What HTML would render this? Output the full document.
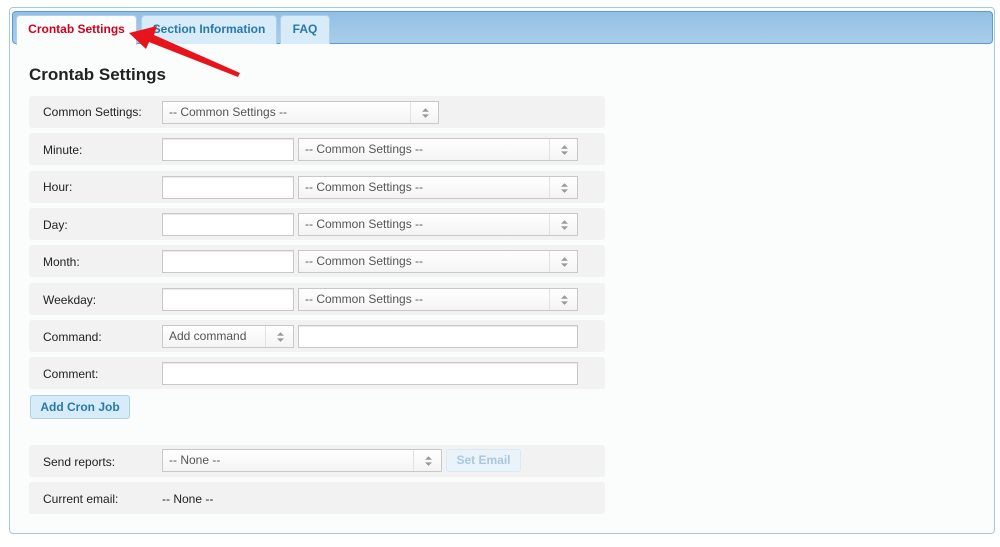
<!DOCTYPE html>
<html><head><style>
*{box-sizing:border-box;margin:0;padding:0}
body{width:1000px;height:547px;background:#fff;font-family:"Liberation Sans",Arial,sans-serif;font-size:12px;color:#222;position:relative;overflow:hidden}
.abs{position:absolute}
.panel{left:9px;top:7px;width:986px;height:527px;border:1px solid #a6c9e2;border-radius:4px;background:#fbfcfc}
.band{left:12px;top:11px;width:981px;height:33px;border:1px solid #5b9bd5;border-radius:4px;background:linear-gradient(#93bfe6,#a9cde9)}
.tab{top:15px;height:29px;border:1px solid #aed0ea;border-bottom:none;border-radius:4px 4px 0 0;background:#d7ebf9;color:#2779aa;font-weight:bold;font-size:12px;text-align:center;line-height:27px}
.tab.act{background:#fbfcfc;color:#d0021b;height:30px}
h1{position:absolute;left:29px;top:65px;font-size:17px;font-weight:bold;color:#222}
.row{left:29px;width:576px;height:32px;background:#f2f2f2;border-radius:3px}
.lbl{left:43px;font-size:12px;color:#222;top:0}
.inp{height:23px;border:1px solid #c8c8c8;background:#fff;box-shadow:inset 0 1px 1px #e8e8e8}
.sel{height:23px;border:1px solid #c8c8c8;background:linear-gradient(#fff,#f4f4f4);color:#555;font-size:12px;line-height:21px;padding-left:6px}
.sel .dv{position:absolute;right:27px;top:0;bottom:0;border-left:1px solid #e2e2e2}
.sel .ar{position:absolute;right:9px;top:6px;width:7px;height:10px}
.btn{border:1px solid #aed0ea;border-radius:3px;background:#d7ebf9;color:#2779aa;font-weight:bold;font-size:12px;text-align:center}
</style></head><body>
<div class="abs panel"></div>
<div class="abs band"></div>
<div class="abs tab act" style="left:16px;width:121px">Crontab Settings</div>
<div class="abs tab" style="left:141px;width:136px">Section Information</div>
<div class="abs tab" style="left:280px;width:50px">FAQ</div>
<h1>Crontab Settings</h1>

<div class="abs row" style="top:96px"></div>
<div class="abs lbl" style="top:105px">Common Settings:</div>
<div class="abs sel" style="left:162px;top:101px;width:277px">-- Common Settings --<span class="dv"></span><svg class="ar" viewBox="0 0 8 11"><path d="M0 4L4 0L8 4ZM0 7L4 11L8 7Z" fill="#999"/></svg></div>

<div class="abs row" style="top:133px"></div><div class="abs lbl" style="top:143px">Minute:</div>
<div class="abs inp" style="left:162px;top:138px;width:132px"></div>
<div class="abs sel" style="left:298px;top:138px;width:280px">-- Common Settings --<span class="dv"></span><svg class="ar" viewBox="0 0 8 11"><path d="M0 4L4 0L8 4ZM0 7L4 11L8 7Z" fill="#999"/></svg></div>

<div class="abs row" style="top:171px"></div><div class="abs lbl" style="top:180px">Hour:</div>
<div class="abs inp" style="left:162px;top:176px;width:132px"></div>
<div class="abs sel" style="left:298px;top:176px;width:280px">-- Common Settings --<span class="dv"></span><svg class="ar" viewBox="0 0 8 11"><path d="M0 4L4 0L8 4ZM0 7L4 11L8 7Z" fill="#999"/></svg></div>

<div class="abs row" style="top:208px"></div><div class="abs lbl" style="top:218px">Day:</div>
<div class="abs inp" style="left:162px;top:213px;width:132px"></div>
<div class="abs sel" style="left:298px;top:213px;width:280px">-- Common Settings --<span class="dv"></span><svg class="ar" viewBox="0 0 8 11"><path d="M0 4L4 0L8 4ZM0 7L4 11L8 7Z" fill="#999"/></svg></div>

<div class="abs row" style="top:245px"></div><div class="abs lbl" style="top:255px">Month:</div>
<div class="abs inp" style="left:162px;top:250px;width:132px"></div>
<div class="abs sel" style="left:298px;top:250px;width:280px">-- Common Settings --<span class="dv"></span><svg class="ar" viewBox="0 0 8 11"><path d="M0 4L4 0L8 4ZM0 7L4 11L8 7Z" fill="#999"/></svg></div>

<div class="abs row" style="top:283px"></div><div class="abs lbl" style="top:293px">Weekday:</div>
<div class="abs inp" style="left:162px;top:288px;width:132px"></div>
<div class="abs sel" style="left:298px;top:288px;width:280px">-- Common Settings --<span class="dv"></span><svg class="ar" viewBox="0 0 8 11"><path d="M0 4L4 0L8 4ZM0 7L4 11L8 7Z" fill="#999"/></svg></div>

<div class="abs row" style="top:320px"></div><div class="abs lbl" style="top:330px">Command:</div>
<div class="abs sel" style="left:162px;top:325px;width:132px">Add command<span class="dv"></span><svg class="ar" viewBox="0 0 8 11"><path d="M0 4L4 0L8 4ZM0 7L4 11L8 7Z" fill="#999"/></svg></div>
<div class="abs inp" style="left:298px;top:325px;width:280px"></div>

<div class="abs row" style="top:357px"></div><div class="abs lbl" style="top:367px">Comment:</div>
<div class="abs inp" style="left:162px;top:362px;width:416px"></div>

<div class="abs btn" style="left:30px;top:395px;width:100px;height:24px;line-height:22px">Add Cron Job</div>

<div class="abs row" style="top:445px"></div><div class="abs lbl" style="top:455px">Send reports:</div>
<div class="abs sel" style="left:162px;top:449px;width:280px">-- None --<span class="dv"></span><svg class="ar" viewBox="0 0 8 11"><path d="M0 4L4 0L8 4ZM0 7L4 11L8 7Z" fill="#999"/></svg></div>
<div class="abs btn" style="left:446px;top:449px;width:75px;height:23px;line-height:21px;background:#eaf3fa;border-color:#dbe9f4;color:#a9c7de">Set Email</div>

<div class="abs row" style="top:482px"></div><div class="abs lbl" style="top:492px">Current email:</div>
<div class="abs" style="left:162px;top:492px">-- None --</div>

<svg class="abs" style="left:0;top:0" width="300" height="100"><polygon points="129,33 157,26 154,35 240,73 238,77 149,42 146,49" fill="#e8141c"/></svg>
</body></html>
